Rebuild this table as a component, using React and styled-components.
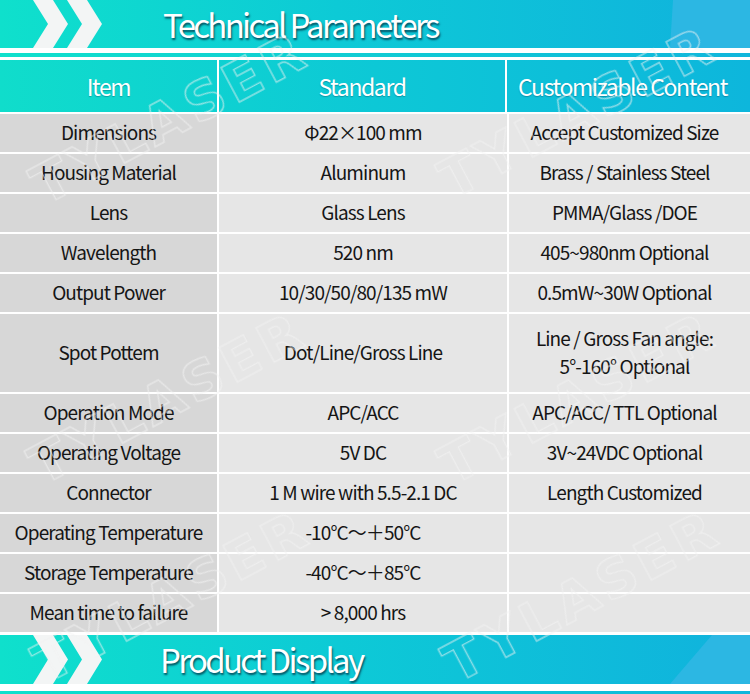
import React from 'react'
import styled, { createGlobalStyle } from 'styled-components'

const GlobalStyle = createGlobalStyle`
	html, body {
		margin: 0;
		padding: 0;
		background: #ffffff;
	}
	body {
		font-family: "Noto Sans CJK SC", "Noto Sans", sans-serif;
	}
`

const Page = styled.div`
	position: relative;
	width: 750px;
	height: 694px;
	overflow: hidden;
	background: #ffffff;
`

const Banner = styled.div`
	position: relative;
	height: ${props => props.$height}px;
	display: flex;
	align-items: center;
	padding-left: 33px;
	background: linear-gradient(90deg, #0fe0cc 0%, #0dcad6 45%, #10b2dd 100%);
	overflow: hidden;
	&::after {
		content: "";
		position: absolute;
		top: 0;
		right: 0;
		width: 80px;
		height: 100%;
		background: #2cb7e3;
		clip-path: polygon(${props => props.$slant}px 0, 80px 0, 80px 100%, 0 100%);
	}
`

const Chevrons = styled.svg`
	flex: none;
	width: 72px;
	height: 100%;
`

const Title = styled.h2`
	margin: 0 0 0 ${props => props.$gap}px;
	font-family: "Noto Sans CJK SC", "Noto Sans", sans-serif;
	font-weight: 400;
	font-size: 33px;
	letter-spacing: -2.7px;
	color: #ffffff;
	text-shadow: 1px 2px 2px rgba(0, 40, 60, 0.75);
	line-height: 1;
	position: relative;
	z-index: 1;
`

const Rule = styled.div`
	height: 4px;
	margin-top: ${props => props.$top}px;
	background: linear-gradient(90deg, #0fe0cc 0%, #10b6dc 100%);
`

const Table = styled.div`
	margin-top: 3px;
	display: flex;
	flex-direction: column;
	gap: 2px;
`

const Row = styled.div`
	display: grid;
	grid-template-columns: 217px 288px 1fr;
	column-gap: 2px;
	height: ${props => props.$height}px;
`

const HeaderRow = styled(Row)`
	background: linear-gradient(90deg, #10ddcb 0%, #0dc8d6 50%, #0db6dc 100%);
	column-gap: 0;
`

const HeadCell = styled.div`
	display: flex;
	align-items: center;
	justify-content: center;
	color: #ffffff;
	font-size: 23px;
	letter-spacing: -1.4px;
	text-shadow: 0 1px 1px rgba(0, 60, 80, 0.35);
	border-left: ${props => (props.$first ? 'none' : '2px solid #ffffff')};
	padding-right: ${props => props.$shift || 0}px;
`

const Cell = styled.div`
	display: flex;
	align-items: center;
	justify-content: center;
	text-align: center;
	background: ${props => (props.$label ? '#d7d7d7' : '#e6e6e6')};
	color: #151515;
	font-size: 19px;
	line-height: 28px;
	letter-spacing: -0.9px;
	white-space: pre-line;
	padding-bottom: 2px;
	padding-right: ${props => props.$shift || 0}px;
`

const Footer = styled.div`
	margin-top: 3px;
`

const Watermark = styled.div`
	position: absolute;
	left: ${props => props.$x}px;
	top: ${props => props.$y}px;
	transform: translate(-50%, -50%) rotate(-28deg);
	font-family: "DejaVu Sans", sans-serif;
	font-weight: 700;
	font-size: 54px;
	letter-spacing: 5px;
	color: transparent;
	-webkit-text-stroke: 1.4px rgba(255, 255, 255, 0.5);
	filter: drop-shadow(0 0 0.5px rgba(140, 140, 140, 0.22));
	pointer-events: none;
	white-space: nowrap;
	z-index: 5;
`

const rows = [
	['Dimensions', 'Φ22×100 mm', 'Accept Customized Size'],
	['Housing Material', 'Aluminum', 'Brass / Stainless Steel'],
	['Lens', 'Glass Lens', 'PMMA/Glass /DOE'],
	['Wavelength', '520 nm', '405~980nm Optional'],
	['Output Power', '10/30/50/80/135 mW', '0.5mW~30W Optional'],
	['Spot Pottem', 'Dot/Line/Gross Line', 'Line / Gross Fan angle:\n5°-160° Optional', 78],
	['Operation Mode', 'APC/ACC', 'APC/ACC/ TTL Optional'],
	['Operating  Voltage', '5V  DC', '3V~24VDC Optional'],
	['Connector', '1 M wire with 5.5-2.1 DC', 'Length Customized'],
	['Operating Temperature', '-10°C～＋50°C', ''],
	['Storage Temperature', '-40°C～＋85°C', ''],
	['Mean time to failure', '> 8,000 hrs', ''],
]

const marks = [
	[170, 118], [578, 112],
	[168, 398], [578, 398],
	[172, 596], [582, 596],
]

function ChevronPair() {
	return (
		<Chevrons viewBox="0 0 72 48" preserveAspectRatio="none">
			<polygon points="0,0 20,0 35,24 20,48 0,48 15,24" fill="#f3f5f5" />
			<polygon points="34,0 54,0 69,24 54,48 34,48 49,24" fill="#f3f5f5" />
		</Chevrons>
	)
}

export default function App() {
	return (
		<Page>
			<GlobalStyle />
			<Banner $height={48} $slant={3}>
				<ChevronPair />
				<Title $gap={58}>Technical Parameters</Title>
			</Banner>
			<Rule $top={5} />
			<Table>
				<HeaderRow $height={52}>
					<HeadCell $first>Item</HeadCell>
					<HeadCell>Standard</HeadCell>
					<HeadCell $shift={12}>Customizable Content</HeadCell>
				</HeaderRow>
				{rows.map(([label, standard, custom, h]) => (
					<Row key={label} $height={h || 38}>
						<Cell $label>{label}</Cell>
						<Cell>{standard}</Cell>
						<Cell $shift={10}>{custom}</Cell>
					</Row>
				))}
			</Table>
			<Footer>
				<Banner $height={49} $slant={42}>
					<ChevronPair />
					<Title $gap={55}>Product Display</Title>
				</Banner>
				<Rule $top={7} />
			</Footer>
			{marks.map(([x, y]) => (
				<Watermark key={`${x}-${y}`} $x={x} $y={y}>TYLASER</Watermark>
			))}
		</Page>
	)
}
